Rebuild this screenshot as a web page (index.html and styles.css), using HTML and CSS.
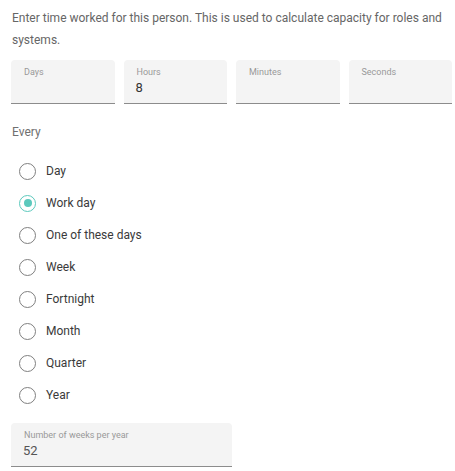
FILE: index.html
```
<!DOCTYPE html>
<html>
<head>
<meta charset="utf-8">
<link rel="stylesheet" href="styles.css">
</head>
<body>
<div class="page">
  <p class="intro">Enter time worked for this person. This is used to calculate capacity for roles and systems.</p>
  <div class="fields">
    <div class="field"><span class="label">Days</span><span class="value"></span></div>
    <div class="field"><span class="label">Hours</span><span class="value">8</span></div>
    <div class="field"><span class="label">Minutes</span><span class="value"></span></div>
    <div class="field"><span class="label">Seconds</span><span class="value"></span></div>
  </div>
  <div class="every">Every</div>
  <div class="radios">
    <div class="radio"><span class="circle"></span><span class="rlabel">Day</span></div>
    <div class="radio checked"><span class="circle"></span><span class="rlabel">Work day</span></div>
    <div class="radio"><span class="circle"></span><span class="rlabel">One of these days</span></div>
    <div class="radio"><span class="circle"></span><span class="rlabel">Week</span></div>
    <div class="radio"><span class="circle"></span><span class="rlabel">Fortnight</span></div>
    <div class="radio"><span class="circle"></span><span class="rlabel">Month</span></div>
    <div class="radio"><span class="circle"></span><span class="rlabel">Quarter</span></div>
    <div class="radio"><span class="circle"></span><span class="rlabel">Year</span></div>
  </div>
  <div class="field wide"><span class="label">Number of weeks per year</span><span class="value v2">52</span></div>
</div>
</body>
</html>
```
FILE: styles.css
```
html, body { margin: 0; padding: 0; background: #fff; }
body { font-family: Roboto, "Liberation Sans", sans-serif; color: #333; }
.page { padding: 7px 2px 0 11px; }
.intro { margin: 0 0 0 1px; font-size: 12px; line-height: 22px; color: #666; }
.fields { display: grid; grid-template-columns: repeat(4, 1fr); gap: 9px; margin: 9px 1px 0 0; }
.field { background: #f4f4f4; border-radius: 4px 4px 0 0; border-bottom: 1px solid #8c8c8c; height: 43px; padding: 0 12px; display: flex; flex-direction: column; box-sizing: content-box; }
.label { font-size: 9px; color: #999; margin-top: 7px; line-height: 11px; padding-left: 1px; }
.value { font-size: 13px; color: #333; line-height: 16px; margin-top: 2px; }
.v2 { color: #555; }
.wide { width: 197px; margin-top: 12px; }
.every { font-size: 12px; color: #707070; margin: 21px 0 0 1px; line-height: 14px; }
.radios { display: flex; flex-direction: column; margin-top: 16px; }
.radio { display: flex; align-items: center; height: 32px; }
.circle { width: 15px; height: 15px; border: 1px solid #808080; border-radius: 50%; margin-left: 8px; position: relative; flex: none; }
.checked .circle { border-color: #5cc9bd; }
.checked .circle::after { content: ""; position: absolute; left: 3.5px; top: 3.5px; width: 8px; height: 8px; border-radius: 50%; background: #5cc9bd; }
.rlabel { font-size: 12px; color: #3a3a3a; margin-left: 10px; }
```
